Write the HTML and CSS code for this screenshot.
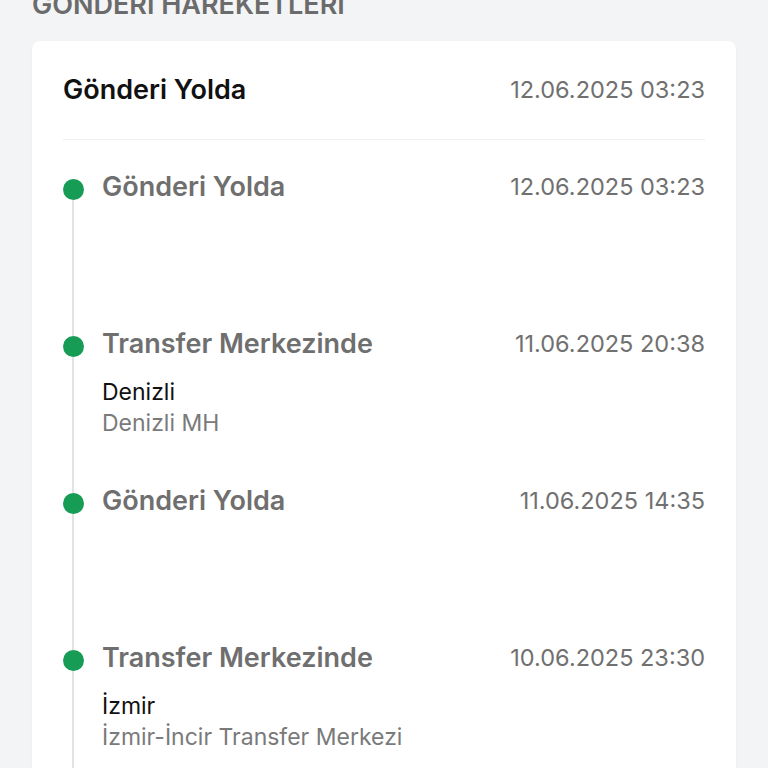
FILE: index.html
```html
<!DOCTYPE html>
<html lang="tr">
<head>
    <meta charset="UTF-8">
    <meta name="viewport" content="width=device-width, initial-scale=1.0">
    <title>Gönderi Hareketleri</title>
    <link rel="stylesheet" href="styles.css">
</head>
<body>

    <h2 class="section-title">GÖNDERİ HAREKETLERİ</h2>

    <div class="card">
        <div class="card-head">
            <span class="head-status">Gönderi Yolda</span>
            <span class="date">12.06.2025 03:23</span>
        </div>

        <ul class="timeline">
            <li class="event first">
                <div class="marker"><span class="stub"></span><span class="dot"></span><span class="line"></span></div>
                <div class="event-body">
                    <div class="event-row">
                        <span class="event-title">Gönderi Yolda</span>
                        <span class="date">12.06.2025 03:23</span>
                    </div>
                </div>
            </li>
            <li class="event">
                <div class="marker"><span class="stub"></span><span class="dot"></span><span class="line"></span></div>
                <div class="event-body">
                    <div class="event-row">
                        <span class="event-title">Transfer Merkezinde</span>
                        <span class="date">11.06.2025 20:38</span>
                    </div>
                    <div class="place">
                        <div class="city">Denizli</div>
                        <div class="unit">Denizli MH</div>
                    </div>
                </div>
            </li>
            <li class="event">
                <div class="marker"><span class="stub"></span><span class="dot"></span><span class="line"></span></div>
                <div class="event-body">
                    <div class="event-row">
                        <span class="event-title">Gönderi Yolda</span>
                        <span class="date">11.06.2025 14:35</span>
                    </div>
                </div>
            </li>
            <li class="event">
                <div class="marker"><span class="stub"></span><span class="dot"></span><span class="line"></span></div>
                <div class="event-body">
                    <div class="event-row">
                        <span class="event-title">Transfer Merkezinde</span>
                        <span class="date">10.06.2025 23:30</span>
                    </div>
                    <div class="place">
                        <div class="city">İzmir</div>
                        <div class="unit">İzmir-İncir Transfer Merkezi</div>
                    </div>
                </div>
            </li>
        </ul>
    </div>

</body>
</html>
```

FILE: styles.css
```css
body {
    margin: 0;
    padding: 0 32px;
    background: #f3f4f6;
    font-family: Inter, "Noto Sans", sans-serif;
    height: 768px;
    overflow: hidden;
}
.section-title {
    margin: -9px 0 0 0;
    font-size: 27px;
    line-height: 27px;
    font-weight: 600;
    color: #6b6b6b;
}
.card {
    margin-top: 23px;
    background: #fff;
    border-radius: 8px;
    box-shadow: 0 1px 3px rgba(0, 0, 0, 0.05);
    padding: 32px 31px 0 31px;
}
.card-head {
    display: flex;
    justify-content: space-between;
    align-items: center;
    height: 32px;
    padding-bottom: 34px;
    border-bottom: 1px solid #f0f0f0;
}
.head-status {
    font-size: 27px;
    font-weight: 600;
    color: #111;
}
.date {
    font-size: 23.5px;
    color: #707070;
}
.timeline {
    list-style: none;
    margin: 0;
    padding: 30px 0 0 0;
}
.event {
    display: flex;
    gap: 19px;
    min-height: 157px;
}
.marker {
    width: 20px;
    display: flex;
    flex-direction: column;
    align-items: center;
    flex-shrink: 0;
}
.stub {
    width: 2px;
    height: 9px;
    background: #e2e2e2;
}
.first .stub {
    background: transparent;
}
.dot {
    width: 21px;
    height: 21px;
    border-radius: 50%;
    background: #179c56;
    flex-shrink: 0;
}
.line {
    width: 2px;
    flex: 1;
    background: #e2e2e2;
}
.event-body {
    flex: 1;
}
.event-row {
    display: flex;
    justify-content: space-between;
    align-items: center;
    height: 32px;
}
.event-title {
    font-size: 27px;
    font-weight: 600;
    color: #6f6f6f;
}
.place {
    margin-top: 18px;
    font-size: 23px;
    line-height: 31px;
}
.city {
    color: #111;
}
.unit {
    color: #7a7a7a;
}
```
